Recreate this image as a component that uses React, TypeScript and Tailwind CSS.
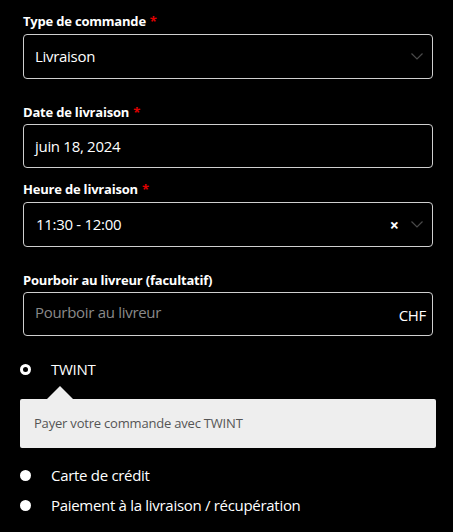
import React from "react";

const font = { fontFamily: '"Open Sans", "Noto Sans", sans-serif' };

function Label({ text, required }: { text: string; required?: boolean }) {
  return (
    <div className="h-[18px] text-[13px] leading-[18px] font-bold text-white tracking-[-0.2px]">
      {text}
      {required && <span className="text-[#e00000] ml-1">*</span>}
    </div>
  );
}

function Chevron() {
  return (
    <svg width="12" height="7" viewBox="0 0 12 7" fill="none">
      <path d="M0.5 0.5l5.5 5.5 5.5-5.5" stroke="#4a4a4a" strokeWidth="1.2" />
    </svg>
  );
}

function Radio({ checked, label }: { checked?: boolean; label: string }) {
  return (
    <div className="flex items-center h-[22px] pl-[20px]">
      <span className="w-[11px] h-[11px] rounded-full bg-white flex items-center justify-center">
        {checked && <span className="w-[5px] h-[5px] rounded-full bg-black" />}
      </span>
      <span className="ml-[20px] text-[15px] text-white tracking-[-0.3px]">{label}</span>
    </div>
  );
}

export default function App() {
  return (
    <div className="w-[453px] h-[532px] bg-black overflow-hidden" style={font}>
      <div className="pt-[12px] pl-[23px] w-[433px]">
        {/* Type de commande */}
        <Label text="Type de commande" required />
        <div className="mt-[4px] h-[45px] border border-[#cfcfcf] rounded-[4px] flex items-center justify-between pl-[11px] pr-[9px]">
          <span className="text-[15px] text-white tracking-[-0.3px]">Livraison</span>
          <Chevron />
        </div>

        {/* Date */}
        <div className="mt-[24px]">
          <Label text="Date de livraison" required />
        </div>
        <div className="mt-[3px] h-[44px] border border-[#cfcfcf] rounded-[4px] flex items-center pl-[11px]">
          <span className="text-[15px] text-white tracking-[-0.3px]">juin 18, 2024</span>
        </div>

        {/* Heure */}
        <div className="mt-[12px]">
          <Label text="Heure de livraison" required />
        </div>
        <div className="mt-[4px] h-[45px] border border-[#cfcfcf] rounded-[4px] flex items-center justify-between pl-[12px] pr-[9px]">
          <span className="text-[15px] text-white tracking-[-0.3px]">11:30 - 12:00</span>
          <div className="flex items-center gap-[12px]">
            <span className="text-[16px] font-bold text-white leading-none">×</span>
            <Chevron />
          </div>
        </div>

        {/* Pourboire */}
        <div className="mt-[24px]">
          <Label text="Pourboir au livreur (facultatif)" />
        </div>
        <div className="mt-[3px] h-[44px] border border-[#cfcfcf] rounded-[4px] flex items-center justify-between pl-[11px] pr-[6px]">
          <span className="text-[15px] text-[#8a8a8a] tracking-[-0.3px] -mt-[3px]">Pourboir au livreur</span>
          <span className="text-[15px] text-white tracking-[-0.3px] mt-[3px]">CHF</span>
        </div>
      </div>

      {/* Paiement */}
      <div className="mt-[22px]">
        <Radio checked label="TWINT" />
        <div className="pl-[47px] mt-[5px] h-[14px] flex items-end">
          <div className="w-0 h-0 border-l-[13px] border-r-[13px] border-b-[13px] border-l-transparent border-r-transparent border-b-[#eeeeee]" />
        </div>
        <div className="ml-[20px] w-[416px] h-[49px] bg-[#eeeeee] rounded-[2px] flex items-center pl-[14px]">
          <span className="text-[13px] text-[#555555] tracking-[-0.2px]">Payer votre commande avec TWINT</span>
        </div>
        <div className="mt-[16px]">
          <Radio label="Carte de crédit" />
        </div>
        <div className="mt-[8px]">
          <Radio label="Paiement à la livraison / récupération" />
        </div>
      </div>
    </div>
  );
}
